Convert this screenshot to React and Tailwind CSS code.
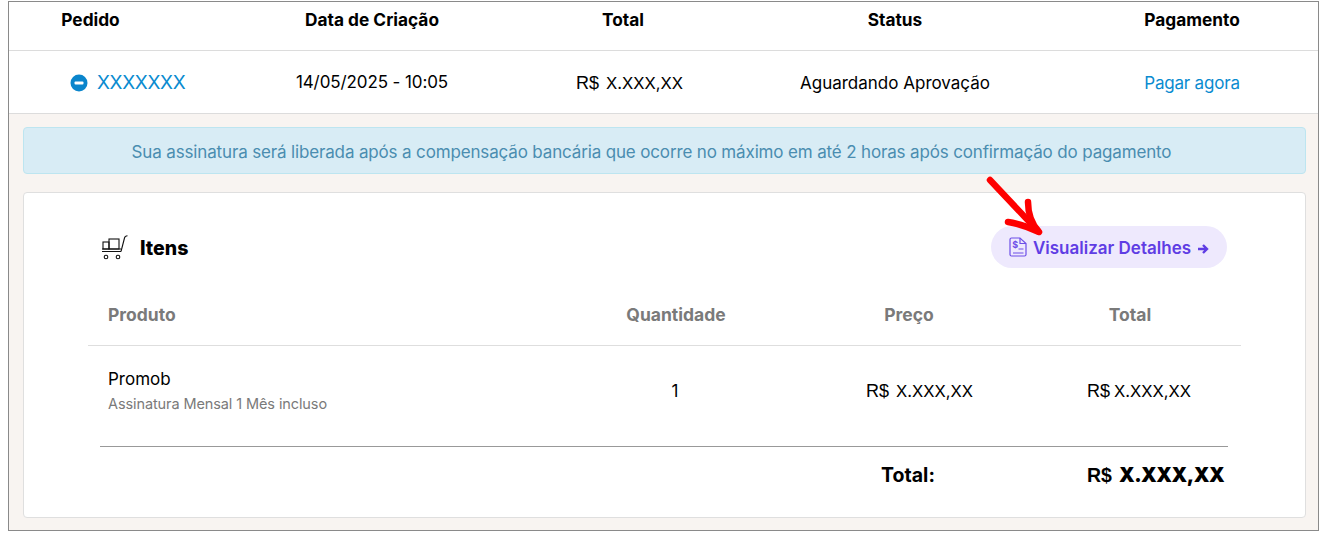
function Money({ gap = "gap-[7px]", className = "" }) {
  return (
    <span className={`inline-flex items-baseline ${gap} ${className}`}>
      <span className="font-['Liberation_Sans',sans-serif] text-[18px]">R$</span>
      <span className="text-[16.500px]">X.XXX,XX</span>
    </span>
  );
}

function CartIcon() {
  return (
    <svg width="27" height="25" viewBox="0 0 27 25" fill="none" stroke="#111" strokeWidth="1.100">
      <path d="M1 14h19M1 16.500h19" />
      <rect x="2" y="7" width="6" height="7" />
      <rect x="8" y="4" width="10" height="10" />
      <path d="M20 16.500 L23.500 3 Q24 0.800 26.500 0.800" />
      <circle cx="5" cy="22" r="1.800" />
      <circle cx="17" cy="22" r="1.800" />
    </svg>
  );
}

function DocIcon() {
  return (
    <svg width="18" height="20" viewBox="0 0 18 20" fill="none" stroke="#6d4fe8" strokeWidth="1.200">
      <path d="M2.500 1h8.500l6 5.500v11a1.500 1.500 0 0 1-1.500 1.500h-13A1.500 1.500 0 0 1 1 17.500v-15A1.500 1.500 0 0 1 2.500 1z" />
      <path d="M11 1v5.500h6" />
      <path d="M9.500 12h5M4 16h10.500" />
      <text x="3.200" y="11" fontSize="9" fontWeight="700" fill="#6d4fe8" stroke="none" fontFamily="Inter, sans-serif">$</text>
    </svg>
  );
}

export default function App() {
  return (
    <div className="relative w-[1327px] h-[547px] bg-white font-['Inter',sans-serif] text-black overflow-hidden">
      <div className="ml-2 mt-px w-[1311px] h-[530px] border border-[#8a8a8a] flex flex-col">
        <div className="grid grid-cols-[163px_400px_102px_442px_152px] h-[49px] border-b border-[#dcdcdc] font-bold text-[17.300px] text-center pb-[13px] items-center shrink-0">
          <div>Pedido</div>
          <div>Data de Criação</div>
          <div>Total</div>
          <div>Status</div>
          <div>Pagamento</div>
        </div>
        <div className="grid grid-cols-[163px_400px_102px_442px_152px] h-[63px] border-b border-[#dcdcdc] text-[17px] text-center items-center shrink-0">
          <div className="flex items-center pl-[61px] gap-[9px] text-[#0a8bd0] text-[19px] tracking-[-0.35px] pt-[2px]">
            <svg width="18" height="18" viewBox="0 0 18 18" className="shrink-0">
              <circle cx="9" cy="9" r="8.500" fill="#0a85cc" />
              <rect x="4.500" y="7.500" width="9" height="3" rx="1" fill="white" />
            </svg>
            XXXXXXX
          </div>
          <div className="tracking-[-0.1px] pt-[2px]">14/05/2025 - 10:05</div>
          <div className="whitespace-nowrap pt-[3px] pl-[4px]"><Money /></div>
          <div className="pt-[3px]">Aguardando Aprovação</div>
          <div className="text-[#0a8bd0] pt-[3px] tracking-[-0.2px]">Pagar agora</div>
        </div>
        <div className="flex-1 bg-[#f8f4f1] pl-[14px] pr-[12px] pt-[13px] flex flex-col">
          <div className="h-[47px] bg-[#d8ecf5] border border-[#bde5f0] rounded-[4px] flex items-center justify-center pr-[26px] pt-[5px] text-[#4a8db0] text-[17px] tracking-[-0.15px] whitespace-nowrap">
            Sua assinatura será liberada após a compensação bancária que ocorre no máximo em até 2 horas após confirmação do pagamento
          </div>
          <div className="mt-[18px] h-[326px] bg-white border border-[#dfdfdf] rounded-[4px] px-[64px] flex flex-col">
            <div className="h-[42px] mt-[33px] flex items-center justify-between pl-[13px] pr-[14px] shrink-0">
              <div className="flex items-center gap-[12px]">
                <CartIcon />
                <span className="font-extrabold text-[19.500px] pt-[3px]">Itens</span>
              </div>
              <div className="w-[236px] h-[42px] rounded-full bg-[#eee9fd] flex items-center justify-center gap-[6px] text-[#5f3de4] font-semibold text-[17px] whitespace-nowrap">
                <DocIcon />
                <span className="pt-[3px]">Visualizar Detalhes</span>
                <svg width="12" height="10" viewBox="0 0 12 10" fill="none" stroke="#5f3de4" strokeWidth="2.400" className="mt-[3px]">
                  <path d="M1 5h9M6 1 10 5l-4 4" />
                </svg>
              </div>
            </div>
            <div className="grid grid-cols-[475px_226px_240px_202px] h-[78px] pt-[18px] items-center border-b border-[#dedede] text-[#7a7a7a] font-bold text-[17.500px] text-center shrink-0">
              <div className="text-left pl-[20px]">Produto</div>
              <div>Quantidade</div>
              <div>Preço</div>
              <div>Total</div>
            </div>
            <div className="grid grid-cols-[475px_226px_240px_202px] h-[100px] pb-[9px] items-center text-center text-[17px] shrink-0">
              <div className="text-left pl-[20px]">
                <div className="leading-[24px]">Promob</div>
                <div className="text-[14.500px] leading-[24px] text-[#7a7a7a] tracking-[-0.1px] pt-px">Assinatura Mensal 1 Mês incluso</div>
              </div>
              <div className="pr-[2px]">1</div>
              <div className="whitespace-nowrap text-left pl-[77px]"><Money /></div>
              <div className="whitespace-nowrap text-left pl-[58px]"><Money gap="gap-[4px]" /></div>
            </div>
            <div className="ml-3 border-t border-[#999] shrink-0 w-[1128px]" />
            <div className="grid grid-cols-[475px_226px_240px_202px] mt-[13px] text-center items-center text-[19.500px] font-bold">
              <div />
              <div />
              <div className="pr-[2px]">Total:</div>
              <div className="whitespace-nowrap text-left pl-[58px]">
                <span className="inline-flex items-baseline gap-[7px]">
                  <span className="font-['Liberation_Sans',sans-serif] text-[19.500px]">R$</span>
                  <span className="text-[20px] font-black tracking-[-0.5px]">X.XXX,XX</span>
                </span>
              </div>
            </div>
          </div>
        </div>
      </div>
      <svg className="absolute left-[980px] top-[170px]" width="70" height="70" viewBox="0 0 70 70" fill="none" stroke="#fe0000" strokeLinecap="round" strokeLinejoin="round" strokeWidth="6.500">
        <path d="M10 10 L58 61" />
        <path d="M48 32 Q48 50 59 62 Q42 54 28 52" />
      </svg>
    </div>
  );
}
